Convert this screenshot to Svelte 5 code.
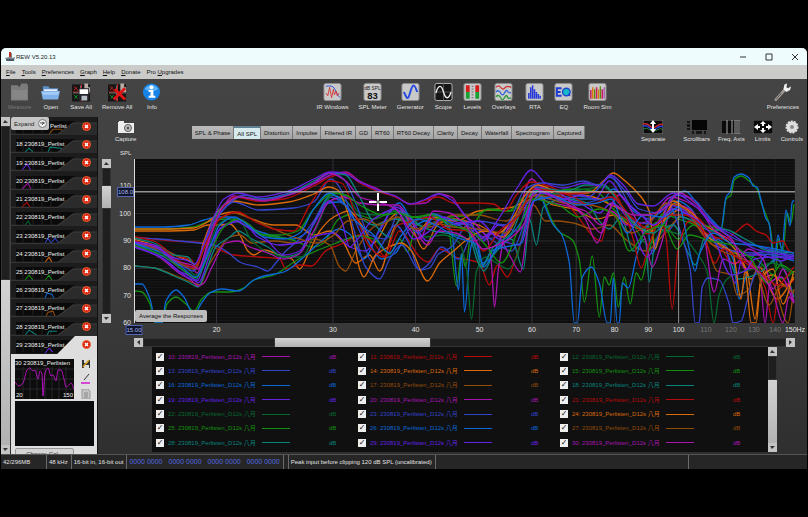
<script>
  const colours = {
    magenta: '#a814b0',
    red: '#b80a0a',
    forest: '#07682f',
    blue: '#3345cc',
    orange: '#dc6a0a',
    green: '#149010',
    azure: '#0c68d8',
    brown: '#944c0a',
    teal: '#08847c',
    purple: '#6422e4'
  };
  const cycle = Object.keys(colours);

  const menus = ['File', 'Tools', 'Preferences', 'Graph', 'Help', 'Donate'];
  const tabs = [
    'SPL & Phase', 'All SPL', 'Distortion', 'Impulse', 'Filtered IR', 'GD', 'RT60',
    'RT60 Decay', 'Clarity', 'Decay', 'Waterfall', 'Spectrogram', 'Captured'
  ];
  let activeTab = $state('All SPL');

  const fileTools = ['Measure', 'Open', 'Save All', 'Remove All', 'Info'];
  const signalTools = [
    'IR Windows', 'SPL Meter', 'Generator', 'Scope', 'Levels', 'Overlays', 'RTA', 'EQ', 'Room Sim'
  ];
  const graphTools = ['Separate', 'Scrollbars', 'Freq. Axis', 'Limits', 'Controls'];

  // measurements 17 - 29 are collapsed in the sidebar, 30 is the open one
  const collapsed = Array.from({ length: 13 }, (_, i) => i + 17);
  const humps = [
    '38,17 42,12 50,12 54,17', '14,17 18,13 22,17 M37,17 39,12 50,13 51,17', '11,17 16,11 20,17',
    '11,17 17,11 20,17', '11,17 16,12 19,17', '14,17 17,13 20,17', '34,17 37,12 40,17 44,12 48,17',
    '34,17 38,12 41,17', '14,17 18,12 22,17 M34,17 38,12 41,17', '34,17 36,12 41,13 43,17',
    '35,17 37,13 42,12 44,17', '14,17 18,12 26,17 M36,17 38,13 46,13', '34,17 38,12 42,16'
  ];

  // 7 and up: the first row is mostly scrolled out of view
  const legend = Array.from({ length: 24 }, (_, i) => ({
    id: i + 7,
    colour: colours[cycle[i < 3 ? i + 7 : (i - 3) % 10]]
  }));

  const W = 662;
  const H = 164;
  const fx = (f) => (Math.log(f / 15) / Math.log(10)) * 100;
  const fy = (db) => ((120 - db) / 60) * 100;
  const levels = [110, 100, 90, 80, 70, 60];
  const freqs = [20, 30, 40, 50, 60, 70, 80, 90, 100, 110, 120, 130, 140, 150];
  const minor = Array.from({ length: 59 }, (_, i) => 119 - i);

  const traces = [
    ['azure', '0,68 30,68 55,66 70,61 84,58 96,58 110,66 130,74 160,80 175,72 195,44 205,43 220,55 238,88 248,100 262,94 276,70 300,60 320,64 336,74 349,104 356,100 372,70 390,50 403,32 425,36 448,40 470,40 480,30 500,52 513,60 519,95 530,62 545,42 558,50 572,74 588,82 600,100 606,140 612,120 622,95 640,96 661,102'],
    ['green', '0,70 30,70 60,68 76,62 92,60 112,66 130,76 155,80 180,88 190,84 205,60 220,55 240,60 262,52 280,58 300,60 318,58 340,56 355,51 378,52 392,40 402,30 420,32 440,30 462,32 480,50 494,62 510,70 528,62 545,80 560,66 578,80 600,94 620,98 640,116 650,120 661,112'],
    ['orange', '0,72 30,72 60,71 74,66 86,66 96,65 106,76 114,92 120,96 130,91 146,96 158,100 166,110 174,96 186,72 200,58 215,52 228,66 240,84 256,60 268,52 280,72 290,90 304,66 320,60 345,66 370,78 384,58 398,34 420,46 440,50 464,60 480,56 500,68 518,72 540,42 560,60 580,86 600,92 614,112 622,160 628,122 640,116 652,126 661,120'],
    ['orange', '0,70 30,70 60,69 72,64 84,56 100,53 116,59 140,66 162,66 180,76 196,72 210,84 222,104 236,96 246,112 260,70 268,60 284,72 300,58 322,62 345,52 365,50 380,48 395,38 410,30 432,40 446,36 460,38 478,46 490,52 512,72 532,60 548,50 568,64 590,78 606,96 618,120 626,108 644,140 661,118'],
    ['red', '0,78 20,80 40,82 70,84 84,90 100,96 125,98 146,100 152,110 166,106 178,107 192,92 210,84 226,76 240,84 252,98 266,72 286,98 294,103 306,90 322,98 346,104 356,126 364,106 374,118 382,100 392,68 402,40 425,36 440,52 468,82 476,54 494,60 515,75 532,54 548,48 566,60 584,82 600,104 616,102 632,128 640,164 646,130 661,122'],
    ['blue', '0,79 25,80 45,82 65,84 80,86 92,92 108,104 124,108 134,112 142,104 152,92 166,80 180,62 196,38 212,46 226,72 238,102 248,86 262,66 275,84 286,111 296,104 308,88 325,100 342,70 360,82 378,92 392,62 404,38 426,42 450,44 478,38 500,62 520,66 534,72 550,54 570,72 590,90 620,94 640,92 661,100'],
    ['brown', '0,107 20,109 40,116 60,124 66,126 74,108 84,92 96,78 106,76 118,84 140,82 160,84 180,80 196,86 206,108 212,112 222,92 240,68 260,60 276,64 296,68 320,56 345,56 372,62 388,52 400,46 412,62 425,62 440,64 460,70 476,66 492,80 512,92 532,74 548,58 568,70 584,112 598,116 604,136 614,132 626,108 640,124 655,164 661,130'],
    ['teal', '0,107 20,109 40,117 56,124 64,128 72,112 82,88 96,78 104,72 118,80 134,88 150,98 166,94 182,60 198,36 212,42 224,56 240,66 262,60 280,64 300,72 322,76 340,84 350,112 360,96 378,80 390,110 396,60 403,86 410,48 430,40 454,44 466,62 476,70 488,58 500,92 512,80 516,123 522,82 540,66 556,96 562,106 572,78 590,86 606,120 626,114 644,100 655,120 661,138'],
    ['green', '0,132 8,133 16,145 21,164 28,164 33,145 42,138 52,145 60,152 68,140 78,133 96,133 110,129 120,121 140,116 165,100 200,85 226,77 240,80 256,95 266,80 274,93 284,60 300,55 315,70 323,127 328,95 332,108 338,70 355,50 375,52 395,35 410,42 418,60 426,73 439,81 446,101 451,143 459,97 466,158 471,118 476,126 480,114 485,148 491,118 497,145 503,114 508,121 514,98 530,55 545,60 565,66 580,68 588,72 593,40 598,36 601,21 608,17 616,22 624,30 628,43 637,68 643,110 645,80 650,92 654,54 658,64 661,45'],
    ['azure', '0,125 8,125 16,140 22,164 28,164 32,142 42,131 50,138 60,156 67,145 76,134 88,130 105,132 120,121 130,117 150,113 170,98 190,80 205,70 216,75 230,100 246,70 266,44 280,62 300,55 318,72 325,131 328,95 331,153 337,90 341,78 349,106 356,95 372,82 390,60 404,28 411,46 420,66 428,75 436,104 441,164 444,164 449,118 458,108 466,124 474,164 477,164 480,119 484,164 486,164 489,124 495,129 503,98 512,70 530,50 552,32 562,42 580,62 588,69 593,38 597,33 601,18 608,15 616,19 620,27 624,28 628,41 633,60 636,64 641,104 645,76 649,91 653,51 657,67 659,44 661,41'],
    ['forest', '0,85 30,92 50,106 62,116 72,96 84,66 96,60 106,62 118,82 136,94 152,98 168,98 184,66 200,34 214,38 226,54 244,56 262,52 276,66 292,78 310,76 326,84 333,110 338,160 343,112 352,98 366,106 375,110 384,96 394,54 406,36 430,34 452,30 470,28 484,40 500,66 516,86 530,72 548,76 562,92 574,112 581,164 586,136 594,120 604,114 620,110 640,104 661,116'],
    ['blue', '0,84 30,98 50,112 62,121 72,90 86,55 100,43 125,51 160,49 180,43 197,20 212,40 220,70 232,108 246,120 256,100 268,86 286,111 296,109 305,95 318,88 335,65 350,80 370,76 385,55 400,28 430,34 455,38 477,18 500,50 516,60 535,45 548,75 557,110 562,164 566,164 569,128 575,119 586,121 596,145 600,164 608,162 614,142 620,120 635,95 648,98 661,97'],
    ['magenta', '0,86 25,98 45,114 58,122 64,127 70,124 78,108 92,84 104,82 116,88 134,94 150,100 164,96 180,72 196,42 210,38 226,44 250,46 264,46 276,60 294,86 305,72 322,74 340,82 362,74 376,96 387,113 394,70 402,40 420,44 444,50 458,64 468,74 478,52 494,66 516,62 538,38 552,42 568,52 580,66 600,82 612,110 626,108 632,164 637,124 648,118 661,144'],
    ['purple', '0,88 25,97 45,112 58,118 64,124 76,96 86,70 98,64 108,62 124,78 145,86 164,84 186,76 200,74 216,88 232,92 246,72 262,48 276,58 294,82 310,68 330,64 350,82 365,66 384,72 394,44 406,32 424,38 446,44 466,54 478,44 496,62 514,98 522,86 536,46 556,54 574,78 592,88 602,124 610,96 628,96 648,102 661,96'],
    ['magenta', '0,84 25,90 45,106 58,108 63,114 72,92 84,58 100,37 125,41 155,36 180,25 200,15 212,13 226,22 246,31 264,39 278,45 292,44 305,35 318,38 330,55 345,68 354,80 358,105 361,148 365,110 372,74 383,58 398,20 408,28 425,33 440,46 452,60 464,84 474,55 486,36 500,55 512,80 519,108 528,85 540,45 556,50 570,72 581,133 590,100 602,105 615,90 630,100 640,130 650,110 661,142'],
    ['orange', '0,80 25,88 45,98 58,103 62,109 70,82 84,52 100,42 125,46 155,43 180,35 195,28 204,31 216,60 226,110 230,118 242,96 255,88 268,84 278,92 294,122 306,104 320,92 333,81 350,72 365,74 380,58 392,36 404,26 430,34 455,34 470,22 480,14 492,22 508,38 516,52 522,90 528,70 540,45 560,55 575,78 600,95 608,140 612,112 618,164 623,164 628,120 640,110 650,145 661,112'],
    ['red', '0,78 20,82 40,96 58,101 62,110 70,88 84,56 102,38 122,42 150,40 180,27 197,18 212,14 226,24 246,33 260,37 278,45 305,38 320,44 345,44 360,45 372,52 383,36 398,23 415,27 436,35 460,33 480,34 492,55 500,80 508,109 516,85 528,60 533,80 539,150 545,90 556,62 575,75 590,80 603,73 614,65 623,72 633,76 640,84 650,82 656,92 661,94'],
    ['teal', '0,79 20,84 40,96 54,98 61,106 70,86 80,60 92,44 106,38 125,40 152,36 180,22 198,14 212,16 224,34 240,64 256,78 270,54 290,68 310,60 330,62 348,108 360,88 378,74 394,38 410,30 434,32 452,26 470,26 486,44 500,64 520,74 540,56 560,62 578,72 590,70 612,80 636,92 661,94'],
    ['blue', '0,81 25,90 45,104 60,112 68,92 82,60 96,44 110,36 130,40 155,34 180,24 198,14 210,20 222,44 236,76 252,80 266,52 284,74 304,56 322,66 345,62 372,66 392,30 408,24 430,26 450,22 466,26 476,18 492,32 506,50 526,54 542,36 560,40 580,64 602,80 628,88 648,94 661,96'],
    ['brown', '0,81 25,92 45,104 60,110 70,90 86,60 100,54 118,60 140,70 160,78 184,84 200,76 214,62 230,60 246,66 264,58 282,70 300,64 320,68 345,70 372,74 390,46 404,36 430,44 456,46 476,52 498,74 514,66 534,44 552,50 570,76 588,92 606,98 622,108 636,146 648,126 661,134'],
    ['red', '0,82 25,88 45,102 60,108 72,84 88,58 104,53 122,63 140,70 160,72 176,46 196,22 208,24 222,56 236,88 250,98 264,66 280,62 296,58 314,70 335,72 350,92 366,72 386,56 400,30 420,32 440,38 456,46 478,38 498,58 516,70 536,56 552,56 566,64 582,104 590,90 606,100 628,114 644,126 661,108'],
    ['purple', '0,87 30,100 50,116 63,122 74,92 88,68 102,62 116,70 132,80 150,96 166,92 180,64 196,42 208,62 216,88 224,80 240,60 262,50 280,80 296,72 310,58 326,64 345,62 365,80 386,86 396,50 408,34 432,40 448,36 462,40 476,22 490,40 508,56 520,66 540,50 560,58 580,78 598,116 612,112 622,100 640,98 661,100'],
    ['green', '0,86 28,96 48,110 62,119 74,98 90,68 104,60 116,66 128,76 146,76 164,72 180,50 200,34 212,36 226,46 250,56 264,54 278,58 298,56 318,66 340,74 352,86 368,104 386,68 400,40 425,46 445,58 466,50 482,56 496,92 512,74 530,66 544,90 556,76 578,82 598,86 618,100 634,124 648,106 661,114'],
    ['azure', '0,84 28,94 48,108 62,118 72,100 86,66 100,58 114,66 130,78 150,80 166,74 180,50 196,34 210,44 222,62 240,76 256,94 268,76 284,60 302,66 322,78 344,86 350,108 364,90 388,84 400,42 420,38 444,46 464,44 478,40 494,74 510,56 530,58 546,48 556,90 562,112 566,96 580,74 598,84 618,86 642,90 661,94'],
    ['magenta', '0,83 22,88 42,102 58,106 64,110 76,78 90,46 106,38 130,42 155,36 180,24 196,14 212,22 226,38 248,44 262,50 276,70 286,80 300,52 316,54 332,66 350,90 372,82 390,66 402,30 420,38 440,48 452,52 468,66 480,46 500,56 514,56 530,50 546,34 564,46 580,70 598,82 616,104 630,118 640,134 650,164 656,138 661,144'],
    ['purple', '0,83 20,86 40,99 52,101 61,105 70,85 80,58 90,40 104,34 125,38 155,32 180,20 197,13 210,14 226,23 246,32 262,37 276,45 290,41 305,35 318,41 333,58 350,78 365,60 383,30 398,11 412,24 430,29 452,24 466,27 477,16 490,26 505,45 520,47 540,34 560,45 578,64 600,76 622,90 645,95 661,98']
  ];

  // monotone cubic through the points, so narrow nulls stay sharp without overshoot
  function smooth(points) {
    const p = points.split(' ').map((s) => s.split(',').map(Number));
    const n = p.length;
    const slope = (i) => (p[i + 1][1] - p[i][1]) / (p[i + 1][0] - p[i][0]);
    const t = p.map((_, i) => {
      if (i === 0) return slope(0);
      if (i === n - 1) return slope(n - 2);
      const a = slope(i - 1);
      const b = slope(i);
      return a * b <= 0 ? 0 : (2 * a * b) / (a + b);
    });
    let d = `M${p[0][0]},${p[0][1]}`;
    for (let i = 0; i < n - 1; i++) {
      const [x0, y0] = p[i];
      const [x1, y1] = p[i + 1];
      const h = (x1 - x0) / 3;
      d += `C${(x0 + h).toFixed(1)},${(y0 + t[i] * h).toFixed(1)} ${(x1 - h).toFixed(1)},${(y1 - t[i + 1] * h).toFixed(1)} ${x1},${y1}`;
    }
    return d;
  }

  const preview = smooth('0,23 4,27 8,24 12,11 15,9 18,12 20,11 23,20 25,12 27,15 28,37 30,14 33,9 36,17 38,16 41,22 43,11 46,11 49,20 51,28 54,26 56,24 59,30');
</script>

{#snippet icon(name)}
  {#if name === 'Measure'}
    <svg class="icon" viewBox="0 0 20 20"><path d="M1 3h7l2 2 2-4h6l1 3v15H1z" fill="#7b7b7b" /><path d="M2 8h16v10H2z" fill="#868686" /></svg>
  {:else if name === 'Open'}
    <svg class="icon" viewBox="0 0 20 20"><path d="M2 4h6l1 2h9v11H2z" fill="#5d8fc8" /><path d="M3 7h14v5H3z" fill="#e4eef8" /><path d="M0 9h20l-2 9H2z" fill="#7fb0ea" /><path d="M1 10h18l-1 3H2z" fill="#a4cbf6" /></svg>
  {:else if name === 'Save All' || name === 'Remove All'}
    <svg class="icon" viewBox="0 0 20 20">
      <rect y="2" width="19" height="18" fill="#151515" />
      <path d="M2 4l5 5M2 8l3-3M1 10h18M10 2v18" stroke="#d02020" fill="none" />
      <path d="M2 13l4 4M3 17l3-4" stroke="#109020" fill="none" />
      <path d="M1 11h18M9 3v16" stroke="#777" fill="none" />
      <path d="M13 1h4v4h2v5h-6z" fill="#b9aca4" />
      {#if name === 'Save All'}
        <path d="M7 6h11v13H7z" fill="#22252c" /><path d="M8 7h9v5H8z" fill="#fff" /><path d="M10 14h6v5h-6z" fill="#b8bdc6" />
      {:else}
        <path d="M7 7l11 11M18 6L6 18" stroke="#e01414" stroke-width="3" />
      {/if}
    </svg>
  {:else if name === 'Info'}
    <svg class="icon" viewBox="0 0 20 20"><circle cx="10" cy="10" r="9" fill="#1683e8" /><path d="M3 7a8 8 0 0 1 14 0q-7 4-14 0" fill="#62b4f8" /><circle cx="10" cy="5" r="2" fill="#fff" /><path d="M7 8h5v6h2v2H7v-2h2v-4H7z" fill="#fff" /></svg>
  {:else if name === 'Preferences'}
    <svg class="icon" viewBox="0 0 20 20"><path d="M3 18L13 7" stroke="#a39d98" stroke-width="3" stroke-linecap="round" /><path d="M3 18l6-7" stroke="#5c5552" /><path d="M11 7l1-5 3-1-1 4 2 1 3-2-1 4-4 2z" fill="#f2f2f2" /></svg>
  {:else if signalTools.includes(name)}
    <svg class="icon" viewBox="0 0 20 20">
      <rect x="1" y="1" width="18" height="18" rx="2" fill={name === 'Scope' ? '#161616' : '#c9c9c9'} stroke={name === 'Scope' ? '#bbb' : '#8b8b8b'} />
      {#if name === 'IR Windows'}
        <path d="M3 4q8-2 10 4t5 8" stroke="#2c55d8" fill="none" /><path d="M3 11l2 3 2-9 2 11 2-9 1 6 2-4 1 5 2-3" stroke="#d43a3a" fill="none" />
      {:else if name === 'SPL Meter'}
        <text x="10" y="8" class="tiny">dB SPL</text><text x="10" y="17" class="digits">83</text>
      {:else if name === 'Generator'}
        <path d="M3 10l3 6c3 3 4-12 7-13 2 0 3 4 4 7" stroke="#2448e0" stroke-width="2" fill="none" />
      {:else if name === 'Scope'}
        <path d="M1 10h18M10 1v18" stroke="#555" /><path d="M2 11C5 1 8 3 10 10s5 9 8 0" stroke="#f0f0f0" stroke-width="1.4" fill="none" />
      {:else if name === 'Levels'}
        <path d="M3 3h4v7H3zM13 3h4v7h-4z" fill="#d81c1c" /><path d="M3 10h4v7H3zM13 10h4v7h-4z" fill="#18a030" /><path d="M9 4h2M9 7h2M9 10h2M9 13h2M9 16h2" stroke="#666" />
      {:else if name === 'Overlays'}
        <path d="M2 5q3-3 5 0t4 1 3-2 4 1" stroke="#d03434" stroke-width="1.4" fill="none" /><path d="M2 10q3-3 5 1t4 0 3-2 4 2" stroke="#3064d8" stroke-width="1.4" fill="none" /><path d="M2 15q3-3 5 1t4 0 3-1 4 1" stroke="#2a9a3a" stroke-width="1.4" fill="none" />
      {:else if name === 'RTA'}
        <path d="M4 17v-6M6 17V5M8 17V3M10 17V7M12 17v-7M14 17v-5M16 17v-3" stroke="#2a3ad8" stroke-width="1.6" />
      {:else if name === 'EQ'}
        <path d="M8 6H3v8h5M3 10h4" stroke="#1c38d0" stroke-width="2" fill="none" /><circle cx="13" cy="10" r="4" fill="#18b8c8" stroke="#1c48d0" stroke-width="1.5" /><path d="M15 12l2 2" stroke="#1c38d0" stroke-width="1.5" />
      {:else}
        <path d="M3 17V8M9 17V5M15 17V7" stroke="#c81c60" stroke-width="1.6" /><path d="M5 17V5M11 17V7" stroke="#d87c10" stroke-width="1.6" /><path d="M7 17V7M13 17V4" stroke="#5a8a10" stroke-width="1.4" /><path d="M17 17V5" stroke="#a020a0" />
      {/if}
    </svg>
  {:else if name === 'Capture'}
    <svg class="icon wide" viewBox="0 0 20 14"><path d="M2 2h1V1h5v2h10v10H2z" fill="#eee" /><circle cx="12" cy="8" r="3.5" fill="#ccc" stroke="#555" /><circle cx="12" cy="8" r="1.5" fill="#555" /></svg>
  {:else if name === 'Separate'}
    <svg class="icon wide" viewBox="0 0 20 14"><rect width="20" height="14" fill="#0b0b0b" stroke="#888" /><path d="M0 4q4-1 7 2t7 0 6-1" stroke="#d02828" stroke-width="1.5" fill="none" /><path d="M0 6q4-1 7 2t7 0 6-1" stroke="#2840d8" stroke-width="1.5" fill="none" /><path d="M0 9q4-2 7 1t7 0 6 0" stroke="#208040" fill="none" /><path d="M10 0l3 4h-2v5h2l-3 4-3-4h2V4H7z" fill="#fff" /></svg>
  {:else if name === 'Scrollbars'}
    <svg class="icon wide" viewBox="0 0 20 14"><rect x="5" width="15" height="10" fill="#060606" /><path d="M0 1h3v2H0zM0 4h3v3H0zM0 8h3v2H0zM5 11h2v3H5zM9 11h6v3H9zM17 11h2v3h-2z" fill="#161616" /></svg>
  {:else if name === 'Freq. Axis'}
    <svg class="icon wide" viewBox="0 0 20 14"><rect width="20" height="14" fill="#0b0b0b" stroke="#777" /><path d="M6 0v14M11 0v14M14 0v14M16 0v14M18 0v14" stroke="#aaa" /></svg>
  {:else if name === 'Limits'}
    <svg class="icon wide" viewBox="0 0 20 14"><rect width="20" height="14" fill="#0b0b0b" stroke="#666" /><path d="M10 1l3 3h-2v2H9V4H7zM10 13l3-3h-2V8H9v2H7zM1 7l4-3v2h2v2H5v2zM19 7l-4-3v2h-2v2h2v2z" fill="#fff" /></svg>
  {:else}
    <svg class="icon wide" viewBox="0 0 20 14"><circle cx="10" cy="7" r="5.5" fill="#ddd" stroke="#ddd" stroke-width="2" stroke-dasharray="2 1" /><circle cx="10" cy="7" r="2" fill="#8a8a8a" /></svg>
  {/if}
{/snippet}

{#snippet arrow(dir)}
  <svg class="arrow" viewBox="0 0 9 9">
    <path d={{ up: 'M2 6l2-3 3 3z', down: 'M2 3h5L4 6z', left: 'M6 2v5L3 4z', right: 'M3 2v5l3-3z' }[dir]} fill="#333" />
  </svg>
{/snippet}

<div class="window">
  <header class="titlebar">
    <svg class="logo" viewBox="0 0 10 10"><path d="M0 6l2 3h7l1-4-3 1V1H4v4z" fill="#7d8794" /><path d="M5 0v5" stroke="#c03020" stroke-width="2" /><path d="M1 8h8" stroke="#223" /></svg>
    <span>REW V5.20.13</span>
    <div class="window-buttons">
      <button aria-label="Minimise"><svg viewBox="0 0 8 8"><path d="M1 4h6" /></svg></button>
      <button aria-label="Maximise"><svg viewBox="0 0 8 8"><path d="M1 1h6v6H1z" /></svg></button>
      <button aria-label="Close"><svg viewBox="0 0 8 8"><path d="M1 1l6 6M7 1L1 7" /></svg></button>
    </div>
  </header>

  <nav class="menubar">
    {#each menus as menu}
      <button><u>{menu[0]}</u>{menu.slice(1)}</button>
    {/each}
    <button>Pro <u>U</u>pgrades</button>
  </nav>

  <div class="toolbar">
    <div class="group">
      {#each fileTools as tool}
        <button class="tool" disabled={tool === 'Measure'}>{@render icon(tool)}{tool}</button>
      {/each}
    </div>
    <div class="group">
      {#each signalTools as tool}
        <button class="tool">{@render icon(tool)}{tool}</button>
      {/each}
    </div>
    <div class="group">
      <button class="tool">{@render icon('Preferences')}Preferences</button>
    </div>
  </div>

  <div class="content">
    <aside class="sidebar">
      <div class="scroll vertical">
        {@render arrow('up')}
        <span class="track upper"></span>
        <span class="thumb lower"></span>
        {@render arrow('down')}
      </div>
      <div class="list">
        {#each collapsed as id, i}
          <div class="item">
            <svg class="shape" viewBox="0 0 86 18" preserveAspectRatio="none">
              <path d="M5 4H64L46 17H5z" fill="#0a0a0a" />
              <path d="M12 5v11M22 5v11M31 5v11M40 5v11" stroke="#222" />
              <path d={'M' + humps[i]} fill="none" stroke={colours[cycle[(id - 10) % 10]]} />
              {#if id === 29}
                <path d="M46 18L64 0H86V18z" fill="#dedede" />
              {:else}
                <path d="M0 17H47L62 6H86V18H0z" fill="#2b2b2b" />
                <path d="M0 17H47L62 6H86" fill="none" stroke="#3b3b3b" />
              {/if}
            </svg>
            {#if i === 0}
              <span class="name behind">Perlist</span>
            {:else}
              <span class="name">{id} 230819_Perlist</span>
            {/if}
            <button class="remove" aria-label="Remove {id}">
              <svg viewBox="0 0 9 9"><circle cx="4.500" cy="4.500" r="4" fill="#d8200c" stroke="#f06030" /><path d="M3 3l3 3M6 3L3 6" stroke="#fff" stroke-width="1.500" /></svg>
            </button>
          </div>
        {/each}
        <div class="selected">
          <div class="thumbnail">
            <span>30 230819_Perlisten</span>
            <svg viewBox="0 0 59 40" preserveAspectRatio="none">
              <path d="M8 8v32M15 8v32M22 8v32M30 8v32M37 8v32M44 8v32M51 8v32M0 10h59M0 20h59M0 30h59" stroke="#26262c" />
              <path d={preview} fill="none" stroke="#b414bc" />
            </svg>
            <p><span>20</span><span>150</span></p>
          </div>
          <div class="actions">
            <svg viewBox="0 0 10 10"><path d="M1 1h8v8H1z" fill="#333" /><path d="M3 1h4v3H3zM3 6h5v3H3z" fill="#ddd" /><path d="M2 8l6-7" stroke="#d8a020" stroke-width="1.500" /></svg>
            <svg viewBox="0 0 10 10"><path d="M3 6l5-6" stroke="#333" /><path d="M0 9h9" stroke="#d018d0" stroke-width="1.500" /></svg>
            <svg viewBox="0 0 10 10"><path d="M1 0h6l2 2v8H1z" fill="#c4c4c4" stroke="#999" /><path d="M3 4h4M3 6h4M3 8h4" stroke="#888" /></svg>
          </div>
          <div class="notes"></div>
          <button class="calibrate">Change Cal...</button>
        </div>
        <button class="expand">Expand
          <svg viewBox="0 0 9 9"><circle cx="4.500" cy="4.500" r="4" fill="#f4f4f4" stroke="#777" /><path d="M2 4h5M4 3l2 1-2 2" stroke="#555" fill="none" /></svg>
        </button>
      </div>
    </aside>

    <main>
      <div class="graph-bar">
        <button class="tool capture">{@render icon('Capture')}Capture</button>
        <div class="tabs" role="tablist">
          {#each tabs as tab}
            <button role="tab" aria-selected={tab === activeTab} class:active={tab === activeTab} onclick={() => (activeTab = tab)}>{tab}</button>
          {/each}
        </div>
        <div class="group">
          {#each graphTools as tool}
            <button class="tool" class:apart={tool === 'Separate'}>{@render icon(tool)}{tool}</button>
          {/each}
        </div>
      </div>

      <div class="chart">
        <span class="unit">SPL</span>
        <div class="scroll vertical">
          {@render arrow('up')}
          <span class="track short"></span>
          <span class="thumb handle"></span>
          <span class="track rest"></span>
          {@render arrow('down')}
        </div>
        <div class="levels">
          {#each levels as db}
            <span style:top="{fy(db)}%">{db}</span>
          {/each}
          <span class="reading" style:top="{fy(108)}%">108.0</span>
        </div>
        <div class="plot">
          <svg viewBox="0 0 {W} {H}" preserveAspectRatio="none">
            {#each minor as db}
              <path d="M0 {(fy(db) * H) / 100}H{W}" stroke={db % 10 ? '#181818' : '#2e2e33'} />
            {/each}
            {#each freqs as f}
              <path d="M{(fx(f) * W) / 100} 0V{H}" stroke={f > 100 ? '#1e1e22' : '#34343c'} />
            {/each}
            {#each traces as [colour, points]}
              <path class="trace" d={smooth(points)} stroke={colours[colour]} />
            {/each}
            <path d="M0 {(fy(108) * H) / 100}H{W}" stroke="#b4b4b4" stroke-width="1.5" opacity="0.8" />
            <path d="M{(fx(100) * W) / 100} 0V{H}" stroke="#b4b4b4" opacity="0.7" />
            <path d="M0 0V{H}" stroke="#ddd" stroke-width="2" />
          </svg>
          <svg class="cross" style:left="{(244 / W) * 100}%" style:top="{(43 / H) * 100}%" viewBox="0 0 18 18"><path d="M0 9h18M9 0v18" stroke="#fff" stroke-width="2" /><path d="M9 7v4M7 9h4" stroke="#444" /></svg>
          <span class="tooltip">Average the Responses</span>
        </div>
        <div class="freqs">
          <span class="reading" style:left="0%">15.00</span>
          {#each freqs as f}
            <span class:faint={f > 100 && f < 150} style:left="{fx(f)}%">{f}{f === 150 ? 'Hz' : ''}</span>
          {/each}
        </div>
        <div class="scroll horizontal">
          {@render arrow('left')}
          <span class="track lead"></span>
          <span class="thumb bar"></span>
          <span class="track tail"></span>
          {@render arrow('right')}
        </div>
      </div>

      <div class="legend">
        <div class="rows">
          <div class="grid">
            {#each legend as row (row.id)}
              <div class="row" style:color={row.colour}>
                {#if row.id < 10}
                  <input type="checkbox" checked aria-label="Measurement {row.id}" />
                {:else}
                  <label><input type="checkbox" checked />{row.id}: 230819_Perlisten_D12s 八月</label>
                  <i></i>
                  <span>dB</span>
                {/if}
              </div>
            {/each}
          </div>
        </div>
        <div class="scroll vertical">
          {@render arrow('up')}
          <span class="track quarter"></span>
          <span class="thumb most"></span>
          {@render arrow('down')}
        </div>
      </div>
    </main>
  </div>

  <footer>
    <span class="memory">42/296MB</span>
    <span>48 kHz</span>
    <span>16-bit in, 16-bit out</span>
    <span class="inputs">
      {#each [1, 2, 3, 4] as n (n)}<b>0000 0000</b>{/each}
    </span>
    <span class="spacer"></span>
    <span>Peak input before clipping 120 dB SPL (uncalibrated)</span>
    <span class="fill"></span>
    <span class="end"></span>
  </footer>
</div>

<style>
  :global(body) {
    background: #000;
  }
  .window {
    margin: 48px 1px;
    border-radius: 5px 5px 0 0;
    overflow: hidden;
    background: linear-gradient(#454545, #3e3e3e 50%, #2e2e2e);
    color: #e2e2e2;
    font: 6px/8px 'Liberation Sans', 'Noto Sans CJK JP', sans-serif;
  }
  button {
    padding: 0;
    border: 0;
    background: none;
    color: inherit;
    font: inherit;
    white-space: nowrap;
  }
  svg {
    display: block;
  }

  .titlebar {
    display: flex;
    align-items: center;
    gap: 1px;
    height: 17px;
    padding: 0 8px 0 4px;
    background: #effcfd;
    color: #222;
  }
  .logo {
    width: 10px;
    height: 10px;
  }
  .window-buttons {
    display: flex;
    gap: 18px;
    margin-left: auto;
  }
  .window-buttons svg {
    width: 8px;
    height: 8px;
    fill: none;
    stroke: #333;
  }

  .menubar {
    display: flex;
    align-items: center;
    gap: 6px;
    height: 14px;
    padding: 0 5px;
    background: #cbcbca;
    color: #111;
  }

  .toolbar {
    display: flex;
    justify-content: space-between;
    height: 37px;
    padding: 3px 8px 0 7px;
    box-sizing: border-box;
  }
  .group {
    display: flex;
    gap: 10px;
  }
  .tool {
    display: flex;
    flex-direction: column;
    align-items: center;
    align-self: start;
    gap: 1px;
  }
  .tool:disabled {
    color: #777;
  }
  .icon {
    width: 19px;
    height: 20px;
  }
  .icon.wide {
    width: 20px;
    height: 14px;
  }
  .tiny {
    font-size: 5px;
    text-anchor: middle;
    fill: #222;
  }
  .digits {
    font-size: 10px;
    font-weight: bold;
    text-anchor: middle;
    fill: #111;
  }

  .content {
    display: grid;
    grid-template-columns: 97px 1fr;
  }
  .sidebar {
    display: flex;
    padding-top: 1px;
  }
  .scroll {
    display: flex;
    background: #222;
  }
  .scroll.vertical {
    flex-direction: column;
    width: 9px;
  }
  .scroll.horizontal {
    height: 9px;
  }
  .arrow {
    flex: none;
    width: 9px;
    height: 9px;
    background: #c4c4c4;
  }
  .track {
    background: #1f1f1f;
    box-shadow: inset 0 0 0 1px #333;
  }
  .thumb {
    background: linear-gradient(#d2d2d2, #b2b2b2);
  }
  .upper { flex: 154; }
  .lower { flex: 165; }
  .short { flex: 18; }
  .handle { flex: 22; }
  .rest { flex: 106; }
  .lead { flex: 132; }
  .bar { flex: 155; }
  .tail { flex: 356; }
  .quarter { flex: 24; }
  .most { flex: 64; }

  .list {
    position: relative;
    display: flex;
    flex: 1;
    flex-direction: column;
    margin-left: 1px;
    border-right: 1px solid #111;
    background: #1c1c1c;
    overflow: hidden;
  }
  .item {
    position: relative;
    display: flex;
    flex: 1;
    align-items: center;
    justify-content: space-between;
    padding: 0 6px 0 5px;
  }
  .shape {
    position: absolute;
    inset: 0;
    width: 100%;
    height: 100%;
  }
  .name {
    position: relative;
    color: #eee;
    white-space: nowrap;
  }
  .behind {
    margin-left: 34px;
  }
  .remove {
    position: relative;
  }
  .remove svg,
  .expand svg {
    width: 9px;
    height: 9px;
  }
  .selected {
    display: grid;
    grid-template-columns: 59px 1fr;
    grid-template-rows: 40px 45px 6px;
    gap: 2px 4px;
    height: 95px;
    padding: 5px 3px 0 4px;
    background: #dedede;
    overflow: hidden;
    box-sizing: content-box;
  }
  .thumbnail {
    position: relative;
    background: #0c0c0c;
    color: #eee;
    white-space: nowrap;
    overflow: hidden;
  }
  .thumbnail svg {
    position: absolute;
    inset: 0;
    width: 100%;
    height: 100%;
  }
  .thumbnail p {
    position: absolute;
    inset: auto 1px 0;
    display: flex;
    justify-content: space-between;
    margin: 0;
  }
  .actions {
    display: flex;
    flex-direction: column;
    gap: 5px;
    padding-left: 3px;
  }
  .actions svg {
    width: 10px;
    height: 10px;
  }
  .notes {
    grid-column: 1 / 3;
    background: #0a0b0c;
  }
  .calibrate {
    height: 12px;
    border: 1px solid #999;
    border-radius: 2px;
    background: #d4d4d4;
    color: #333;
  }
  .expand {
    position: absolute;
    top: 0;
    left: 0;
    display: flex;
    align-items: center;
    gap: 4px;
    padding: 2px 2px 2px 3px;
    border-radius: 2px;
    background: #c6c6c6;
    color: #222;
  }

  .graph-bar {
    display: flex;
    justify-content: space-between;
    height: 31px;
    padding: 4px 4px 0 17px;
    box-sizing: border-box;
  }
  .graph-bar .group {
    gap: 8px;
  }
  .apart {
    margin-right: 10px;
  }
  .tabs {
    display: flex;
    align-self: start;
    margin-top: 6px;
  }
  .tabs button {
    height: 13px;
    padding: 0 3px;
    border-right: 1px solid #777;
    background: linear-gradient(#bcbcbc, #a4a4a4);
    color: #111;
  }
  .tabs button.active {
    border-top: 2px solid #5f8090;
    background: #d6eaee;
  }

  .chart {
    display: grid;
    grid-template-columns: 9px 23px 1fr;
    grid-template-rows: 12px 164px 15px 9px;
    padding: 0 12px 0 4px;
    font-size: 7px;
  }
  .unit {
    grid-column: 2 / 4;
    padding: 2px 9px;
    font-size: 6px;
  }
  .levels {
    position: relative;
  }
  .levels span {
    position: absolute;
    right: 3px;
    transform: translateY(-50%);
  }
  .plot {
    position: relative;
    background: #0e0e0e;
  }
  .plot > svg:first-child {
    width: 100%;
    height: 100%;
  }
  .trace {
    fill: none;
    stroke-width: 1.3;
    vector-effect: non-scaling-stroke;
  }
  .plot .cross {
    position: absolute;
    width: 18px;
    height: 18px;
    transform: translate(-50%, -50%);
  }
  .tooltip {
    position: absolute;
    left: 1px;
    bottom: 1px;
    padding: 2px 4px;
    border-radius: 2px;
    background: #bdbdbd;
    color: #111;
    font-size: 6px;
  }
  .freqs {
    grid-column: 3;
    position: relative;
  }
  .freqs span {
    position: absolute;
    top: 3px;
    transform: translateX(-50%);
  }
  .freqs .faint {
    color: #777;
  }
  .levels .reading,
  .freqs .reading {
    border: 1px solid #5468b0;
    background: #10142c;
    color: #a8b4e8;
    font-size: 6px;
  }
  .levels .reading {
    right: 0;
  }
  .freqs .reading {
    top: 2px;
  }
  .horizontal {
    grid-column: 3;
  }

  .legend {
    display: flex;
    height: 105px;
    margin: 0 30px 2px 54px;
  }
  .rows {
    flex: 1;
    background: #101011;
    overflow: hidden;
  }
  .grid {
    display: grid;
    grid-template-columns: repeat(3, 1fr);
    grid-template-rows: repeat(8, 1fr);
    height: 115px;
    margin-top: -12px;
    padding: 0 6px 0 4px;
  }
  .row {
    display: grid;
    grid-template-columns: 102px 28px 1fr;
    align-items: center;
    gap: 4px;
  }
  .row label {
    display: flex;
    align-items: center;
    gap: 4px;
    white-space: nowrap;
  }
  .row i {
    height: 1px;
    background: currentColor;
  }
  .row span {
    padding-left: 35px;
  }
  input {
    appearance: none;
    width: 8px;
    height: 8px;
    margin: 0;
    background: #eee;
    color: #111;
    font: bold 8px/8px 'DejaVu Sans', sans-serif;
  }
  input:checked::before {
    content: '✓';
    display: block;
    text-align: center;
  }

  footer {
    display: flex;
    height: 15px;
    border-top: 1px solid #555;
    box-sizing: border-box;
    background: #262626;
    line-height: 14px;
    white-space: nowrap;
  }
  footer > span {
    padding: 0 3px 0 2px;
    border-right: 1px solid #6a6a6a;
  }
  .memory {
    width: 40px;
  }
  footer .inputs {
    display: flex;
    gap: 6px;
    font-size: 7px;
    color: #5468e0;
  }
  .inputs b {
    font-weight: normal;
  }
  footer .spacer {
    padding: 0 2px;
  }
  footer .fill {
    flex: 1;
  }
  footer .end {
    width: 113px;
    border: 0;
  }
</style>
